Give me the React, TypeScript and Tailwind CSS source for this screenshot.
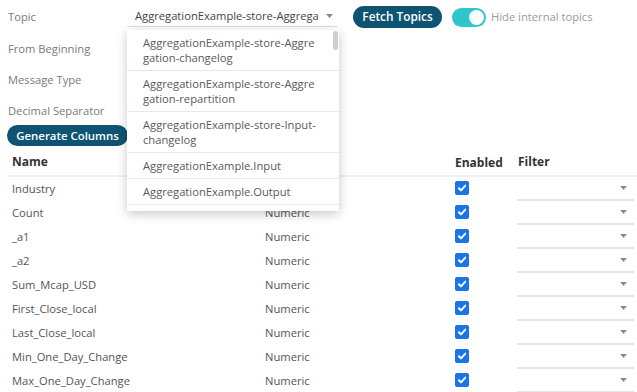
import React from "react";

const rows = [
  "Industry",
  "Count",
  "_a1",
  "_a2",
  "Sum_Mcap_USD",
  "First_Close_local",
  "Last_Close_local",
  "Min_One_Day_Change",
  "Max_One_Day_Change",
];

const items = [
  "AggregationExample-store-Aggregation-changelog",
  "AggregationExample-store-Aggregation-repartition",
  "AggregationExample-store-Input-changelog",
  "AggregationExample.Input",
  "AggregationExample.Output",
  "AggregationExample.Other",
];

function Caret() {
  return (
    <svg width="7" height="4" viewBox="0 0 7 4" className="shrink-0">
      <path d="M0 0 L7 0 L3.5 4 Z" fill="#8a8a8a" />
    </svg>
  );
}

function Check() {
  return (
    <div className="w-[14px] h-[14px] rounded-[2px] bg-[#1a73e8] flex items-center justify-center mt-[-2px]">
      <svg width="10" height="10" viewBox="0 0 10 10">
        <path d="M1.8 5.2 L4 7.3 L8.3 2.6" stroke="white" strokeWidth="1.9" fill="none" strokeLinecap="round" strokeLinejoin="round" />
      </svg>
    </div>
  );
}

export default function App() {
  return (
    <div
      className="relative w-[637px] h-[392px] overflow-hidden bg-white text-[11.2px] pl-[7px]"
      style={{ fontFamily: "'Open Sans', 'Noto Sans', sans-serif" }}
    >
      {/* form */}
      <div className="pt-[1px]">
        <div className="flex items-center h-[33px]">
          <div className="w-[120px] pl-px text-[#7a7a7a]">Topic</div>
          <div className="relative w-[211px] h-[20px] border-b border-[#dcdcdc] flex items-center pl-[8px] pr-[5px] mt-[-2px]">
            <div className="flex-1 overflow-hidden whitespace-nowrap text-[#444]">AggregationExample-store-Aggregation-changelog</div>
            <div className="w-[14px] flex justify-end"><Caret /></div>
          </div>
          <button className="ml-[15px] h-[22px] w-[89px] rounded-full bg-[#0e5472] text-white font-semibold text-[11.8px] leading-none mt-[-1px]">
            Fetch Topics
          </button>
          <div className="ml-[10px] w-[34px] h-[19px] rounded-full bg-[#2ec6ca] flex items-center justify-end pr-[2px] mt-[-1px]">
            <div className="w-[15px] h-[15px] rounded-full bg-white" />
          </div>
          <div className="ml-[5px] text-[#9a9a9a] mt-[-1px]">Hide internal topics</div>
        </div>
        <div className="flex items-center h-[31px] pl-px text-[#7a7a7a]">From Beginning</div>
        <div className="flex items-center h-[31px] pl-px text-[#7a7a7a]">Message Type</div>
        <div className="flex items-center h-[31px] pl-px text-[#7a7a7a]">Decimal Separator</div>
      </div>
      <button className="-mt-[2px] h-[21px] w-[121px] rounded-full bg-[#0e5472] text-white font-semibold text-[11.4px] leading-none">
        Generate Columns
      </button>

      {/* table */}
      <div className="mt-[1px]">
        <div className="flex items-center h-[30px] pt-[2px] border-b-2 border-[#f0f0f0] font-bold text-[#333] text-[12px]">
          <div className="w-[258px] pl-[5px]">Name</div>
          <div className="w-[190px]" />
          <div className="w-[63px] pt-[2px]">Enabled</div>
          <div className="flex-1">Filter</div>
        </div>
        {rows.map((r) => (
          <div key={r} className="flex items-center h-[24px] text-[#555]">
            <div className="w-[258px] pl-[5px]">{r}</div>
            <div className="w-[190px]">{r === "Industry" ? "" : "Numeric"}</div>
            <div className="w-[62px] flex"><Check /></div>
            <div className="w-[117px] h-full flex items-center justify-end pr-[7px] border-b-2 border-[#e4e4e4]">
              <Caret />
            </div>
          </div>
        ))}
      </div>

      {/* dropdown */}
      <div className="absolute left-[127px] top-[30px] w-[212px] h-[181px] bg-white overflow-hidden shadow-[0_3px_10px_rgba(0,0,0,0.22)] text-[#5a5a5a]">
        <div className="absolute right-[1px] top-[1px] w-[5px] h-[19px] rounded-full bg-[#cfcfcf]" />
        {items.map((it) => (
          <div key={it} className="pl-[16px] pr-[20px] py-[5px] leading-[15px] border-b border-[#e8e8e8] break-all">
            {it}
          </div>
        ))}
      </div>
    </div>
  );
}
